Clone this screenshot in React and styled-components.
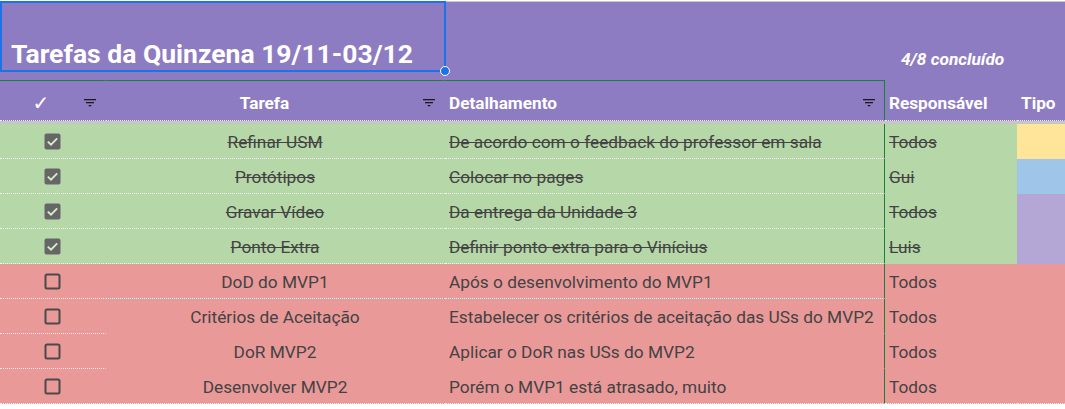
import React from 'react';
import styled, { createGlobalStyle } from 'styled-components';

const GlobalStyle = createGlobalStyle`
  * { box-sizing: border-box; }
  body {
    margin: 0;
    background: #fff;
    font-family: Roboto, "Liberation Sans", Arial, sans-serif;
  }
`;

const COLS = '106px 339px 440px 132px 1fr';
const PURPLE = '#8e7cc3';
const GREEN_LINE = '#188038';

const Sheet = styled.div`
  position: relative;
  width: 1065px;
`;

const TopStrip = styled.div`
  height: 2px;
  background: #fff;
  border-bottom: 1px solid #c8c8c8;
`;

const TitleRow = styled.div`
  display: grid;
  grid-template-columns: ${COLS};
  height: 78px;
  background: ${PURPLE};
  align-items: end;
`;

const Title = styled.h1`
  grid-column: 1 / 4;
  margin: 0;
  padding: 0 0 11px 11px;
  font-size: 26.5px;
  line-height: 31px;
  font-weight: 700;
  color: #fff;
`;

const Done = styled.div`
  grid-column: 4 / 6;
  text-align: left;
  padding: 0 0 11px 16px;
  font-size: 17.3px;
  line-height: 20px;
  font-weight: 700;
  font-style: italic;
  color: #fff;
`;

const HeaderRow = styled.div`
  display: grid;
  grid-template-columns: ${COLS};
  background: ${PURPLE};
`;

const HeadCell = styled.div`
  display: flex;
  align-items: center;
  justify-content: ${p => p.$align || 'flex-start'};
  height: 41px;
  padding: 4px 4px 0 4px;
  border-top: 1px solid ${p => (p.$filtered ? GREEN_LINE : 'transparent')};
  border-right: 1px solid ${p => (p.$edge ? GREEN_LINE : 'transparent')};
  border-bottom: 1px dotted rgba(255, 255, 255, 0.85);
  color: #fff;
  font-size: 17.2px;
  line-height: 20px;
  font-weight: 700;
  white-space: nowrap;
`;

const HeadLabel = styled.span`
  flex: 1;
  text-align: ${p => p.$align || 'left'};
`;

const Tick = styled.span`
  flex: 1;
  text-align: center;
  font-family: "DejaVu Sans", sans-serif;
  font-size: 20px;
  padding-right: 2px;
`;

const FilterBox = styled.span`
  display: inline-flex;
  width: 20px;
  justify-content: center;
  margin-right: 1px;
`;

const Freeze = styled.div`
  height: 3px;
  background: #c6c6c6;
`;

const Row = styled.div`
  display: grid;
  grid-template-columns: ${COLS};
  background: ${p => (p.$done ? '#b6d7a8' : '#ea9999')};
`;

const Cell = styled.div`
  display: flex;
  align-items: center;
  justify-content: ${p => p.$align || 'flex-start'};
  height: 35px;
  padding: 1px 4px 0;
  background: ${p => p.$bg || 'transparent'};
  border-right: 1px solid ${p => (p.$edge ? GREEN_LINE : 'transparent')};
  border-bottom: 1px ${p => (p.$dotted ? 'dotted' : 'solid')} ${p => (p.$dotted ? 'rgba(255,255,255,0.8)' : 'transparent')};
  color: #434343;
  font-size: 17.3px;
  line-height: 20px;
  text-decoration: ${p => (p.$strike ? 'line-through' : 'none')};
  white-space: nowrap;
  overflow: hidden;
`;

const Selection = styled.div`
  position: absolute;
  left: 0;
  top: 1px;
  width: 446px;
  height: 71px;
  border: 2px solid #1a73e8;
  pointer-events: none;
`;

const Handle = styled.span`
  position: absolute;
  right: -6px;
  bottom: -6px;
  width: 10px;
  height: 10px;
  border-radius: 50%;
  background: #1a73e8;
  border: 1.5px solid #fff;
`;

const FilterIcon = () => (
  <svg width="12" height="8" viewBox="0 0 12 8">
    <rect x="0" y="0" width="12" height="1.3" fill="#1b1b1b" />
    <rect x="2" y="3" width="8" height="1.3" fill="#1b1b1b" />
    <rect x="4.7" y="6" width="2.6" height="1.3" fill="#1b1b1b" />
  </svg>
);

const Checkbox = ({ checked }) =>
  checked ? (
    <svg width="17" height="17" viewBox="0 0 17 17">
      <rect x="0.5" y="0.5" width="16" height="16" rx="2" fill="#666" />
      <path d="M3.8 8.6 L7 11.7 L13.2 5.4" fill="none" stroke="#d6ecc9" strokeWidth="1.9" />
    </svg>
  ) : (
    <svg width="17" height="17" viewBox="0 0 17 17">
      <rect x="1.5" y="1.5" width="14" height="14" rx="1.5" fill="none" stroke="#4a4a4a" strokeWidth="2" />
    </svg>
  );

// dots: 'full' = A..C, 'first' = only A, 'all' = every column
const tasks = [
  { done: true, task: 'Refinar USM', detail: 'De acordo com o feedback do professor em sala', who: 'Todos', type: '#ffe599', dots: 'full' },
  { done: true, task: 'Protótipos', detail: 'Colocar no pages', who: 'Gui', type: '#9fc5e8', dots: 'full' },
  { done: true, task: 'Gravar Vídeo', detail: 'Da entrega da Unidade 3', who: 'Todos', type: '#b4a7d6', dots: 'full' },
  { done: true, task: 'Ponto Extra', detail: 'Definir ponto extra para o Vinícius', who: 'Luis', type: '#b4a7d6', dots: 'full' },
  { done: false, task: 'DoD do MVP1', detail: 'Após o desenvolvimento do MVP1', who: 'Todos', dots: 'full' },
  { done: false, task: 'Critérios de Aceitação', detail: 'Estabelecer os critérios de aceitação das USs do MVP2', who: 'Todos', dots: 'first' },
  { done: false, task: 'DoR MVP2', detail: 'Aplicar o DoR nas USs do MVP2', who: 'Todos', dots: 'first' },
  { done: false, task: 'Desenvolver MVP2', detail: 'Porém o MVP1 está atrasado, muito', who: 'Todos', dots: 'all' },
];

const App = () => {
  return (
    <>
      <GlobalStyle />
      <Sheet>
        <TopStrip />
        <TitleRow>
          <Title>Tarefas da Quinzena 19/11-03/12</Title>
          <Done>4/8 concluído</Done>
        </TitleRow>
        <HeaderRow>
          <HeadCell $filtered>
            <Tick>✓</Tick>
            <FilterBox><FilterIcon /></FilterBox>
          </HeadCell>
          <HeadCell $filtered>
            <HeadLabel $align="center">Tarefa</HeadLabel>
            <FilterBox><FilterIcon /></FilterBox>
          </HeadCell>
          <HeadCell $filtered $edge>
            <HeadLabel>Detalhamento</HeadLabel>
            <FilterBox><FilterIcon /></FilterBox>
          </HeadCell>
          <HeadCell>Responsável</HeadCell>
          <HeadCell>Tipo</HeadCell>
        </HeaderRow>
        <Freeze />
        {tasks.map(t => {
          const inRange = t.dots !== 'first';
          return (
            <Row key={t.task} $done={t.done}>
              <Cell $align="center" $dotted>
                <Checkbox checked={t.done} />
              </Cell>
              <Cell $align="center" $dotted={inRange} $strike={t.done}>{t.task}</Cell>
              <Cell $edge $dotted={inRange} $strike={t.done}>{t.detail}</Cell>
              <Cell $dotted={t.dots === 'all'} $strike={t.done}>{t.who}</Cell>
              <Cell $bg={t.type} $dotted={t.dots === 'all'} />
            </Row>
          );
        })}
        <Selection>
          <Handle />
        </Selection>
      </Sheet>
    </>
  );
};

export default App;
